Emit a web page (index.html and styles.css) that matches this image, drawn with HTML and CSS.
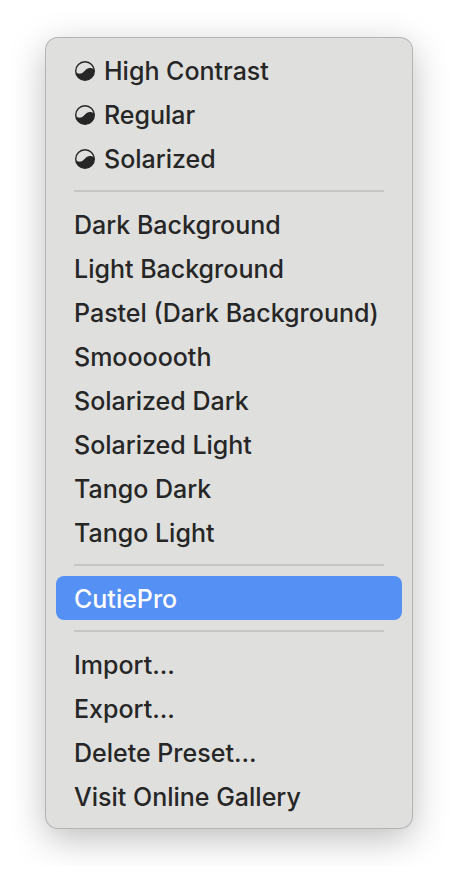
FILE: index.html
```html
<!DOCTYPE html>
<html lang="en">

<head>
    <meta charset="utf-8" />
    <meta name="viewport" content="width=device-width, initial-scale=1" />
    <title>Color Presets</title>
    <link rel="stylesheet" href="styles.css">
</head>

<body>
    <svg class="defs" width="0" height="0">
        <symbol id="contrast" viewBox="0 0 20 20">
            <circle cx="10" cy="10" r="9.3" fill="none" stroke="currentColor" stroke-width="1.4" />
            <path fill="currentColor" d="M.8 11.300C3 13.300 6.500 13.400 9 10.600C11.500 7.800 14.500 5.300 19.200 8.500A9.300 9.300 0 1 1 .8 11.300Z" />
        </symbol>
    </svg>

    <div class="menu" role="menu">
        <button class="item" role="menuitem"><svg class="icon"><use href="#contrast" /></svg>High Contrast</button>
        <button class="item" role="menuitem"><svg class="icon"><use href="#contrast" /></svg>Regular</button>
        <button class="item" role="menuitem"><svg class="icon"><use href="#contrast" /></svg>Solarized</button>
        <hr>
        <button class="item" role="menuitem">Dark Background</button>
        <button class="item" role="menuitem">Light Background</button>
        <button class="item" role="menuitem">Pastel (Dark Background)</button>
        <button class="item" role="menuitem">Smoooooth</button>
        <button class="item" role="menuitem">Solarized Dark</button>
        <button class="item" role="menuitem">Solarized Light</button>
        <button class="item" role="menuitem">Tango Dark</button>
        <button class="item" role="menuitem">Tango Light</button>
        <hr>
        <button class="item selected" role="menuitem">CutiePro</button>
        <hr>
        <button class="item" role="menuitem">Import...</button>
        <button class="item" role="menuitem">Export...</button>
        <button class="item" role="menuitem">Delete Preset...</button>
        <button class="item" role="menuitem">Visit Online Gallery</button>
    </div>
</body>

</html>
```

FILE: styles.css
```css
body {
    margin: 0;
    padding: 38px 46px;
    background-color: #fff;
    font-family: Inter, sans-serif;
}

.defs {
    display: block;
}

.menu {
    padding: 10px;
    background-color: #dfdfdd;
    border-radius: 12px;
    box-shadow: 0 0 0 1px #b4b4b4, 0 10px 36px rgba(0, 0, 0, 0.27);
}

.item {
    display: flex;
    align-items: center;
    gap: 9px;
    width: 100%;
    height: 44px;
    padding: 2px 18px 0;
    border: none;
    border-radius: 8px;
    background: none;
    color: #262626;
    font-family: inherit;
    font-size: 25px;
    font-weight: 450;
    text-align: left;
    white-space: nowrap;
}

.item.selected {
    background-color: #5590f5;
    color: #fff;
    font-weight: 500;
}

.icon {
    width: 20px;
    height: 20px;
    margin-left: 1px;
}

hr {
    height: 2px;
    margin: 10px 18px;
    border: none;
    background-color: #c5c5c3;
}
```
